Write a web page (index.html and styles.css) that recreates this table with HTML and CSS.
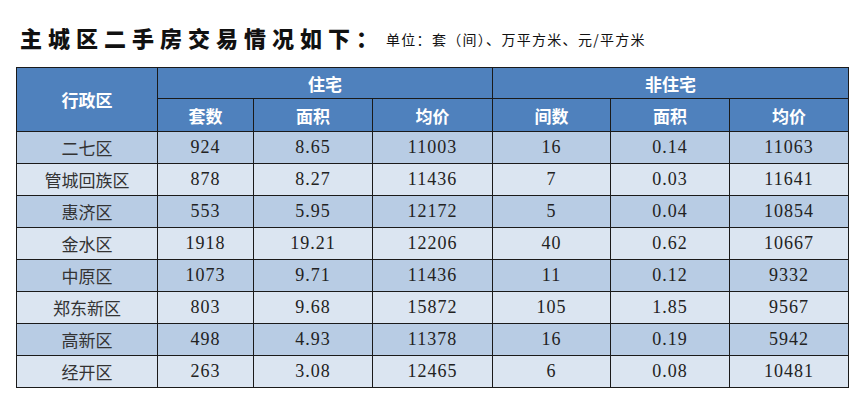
FILE: index.html
```html
<!DOCTYPE html>
<html lang="zh-CN">
<head>
<meta charset="utf-8">
<title>主城区二手房交易情况</title>
<link rel="stylesheet" href="styles.css">
</head>
<body>
<div class="page">
  <div class="heading">
    <span class="title">主城区二手房交易情况如下：</span>
    <span class="unit">单位：套（间）、万平方米、元/平方米</span>
  </div>
  <table class="data">
    <colgroup>
      <col class="c0"><col class="c1"><col class="c2"><col class="c3"><col class="c4"><col class="c5"><col class="c6">
    </colgroup>
    <thead>
      <tr class="h1">
        <th rowspan="2">行政区</th>
        <th colspan="3">住宅</th>
        <th colspan="3">非住宅</th>
      </tr>
      <tr class="h2">
        <th>套数</th><th>面积</th><th>均价</th>
        <th>间数</th><th>面积</th><th>均价</th>
      </tr>
    </thead>
    <tbody>
      <tr class="odd"><td class="name">二七区</td><td>924</td><td>8.65</td><td>11003</td><td>16</td><td>0.14</td><td>11063</td></tr>
      <tr class="even"><td class="name">管城回族区</td><td>878</td><td>8.27</td><td>11436</td><td>7</td><td>0.03</td><td>11641</td></tr>
      <tr class="odd"><td class="name">惠济区</td><td>553</td><td>5.95</td><td>12172</td><td>5</td><td>0.04</td><td>10854</td></tr>
      <tr class="even"><td class="name">金水区</td><td>1918</td><td>19.21</td><td>12206</td><td>40</td><td>0.62</td><td>10667</td></tr>
      <tr class="odd"><td class="name">中原区</td><td>1073</td><td>9.71</td><td>11436</td><td>11</td><td>0.12</td><td>9332</td></tr>
      <tr class="even"><td class="name">郑东新区</td><td>803</td><td>9.68</td><td>15872</td><td>105</td><td>1.85</td><td>9567</td></tr>
      <tr class="odd"><td class="name">高新区</td><td>498</td><td>4.93</td><td>11378</td><td>16</td><td>0.19</td><td>5942</td></tr>
      <tr class="even"><td class="name">经开区</td><td>263</td><td>3.08</td><td>12465</td><td>6</td><td>0.08</td><td>10481</td></tr>
    </tbody>
  </table>
</div>
</body>
</html>
```
FILE: styles.css
```css
html, body {
  margin: 0;
  padding: 0;
  background: #ffffff;
}

.page {
  width: 860px;
  height: 404px;
  padding: 23px 0 0 16px;
  box-sizing: border-box;
}

.heading {
  display: flex;
  align-items: center;
  height: 28px;
  padding-left: 4px;
  margin-bottom: 16px;
}

.title {
  font-family: "Noto Sans CJK SC", sans-serif;
  font-weight: 900;
  font-size: 22px;
  letter-spacing: 6px;
  color: #111;
  line-height: 28px;
}

.unit {
  font-family: "Noto Sans CJK SC", sans-serif;
  font-size: 14px;
  color: #111;
  margin-left: 2px;
  margin-top: 4px;
  letter-spacing: 1.3px;
}

.data {
  border-collapse: collapse;
  width: 832px;
  table-layout: fixed;
  border: 1.5px solid #1a1a1a;
}

.c0 { width: 141px; }
.c1 { width: 96px; }
.c2 { width: 119px; }
.c3 { width: 120px; }
.c4 { width: 118px; }
.c5 { width: 119px; }
.c6 { width: 119px; }

.data th,
.data td {
  border: 1px solid #1a1a1a;
  text-align: center;
  vertical-align: middle;
  padding: 0;
}

.data th {
  background: #4f81bd;
  color: #ffffff;
  font-family: "Noto Sans CJK SC", sans-serif;
  font-weight: 700;
  font-size: 17px;
}

.h1 th { height: 30px; }
.h2 th { height: 32px; }

.data td {
  height: 31px;
  font-family: "Liberation Serif", "Noto Sans CJK SC", serif;
  font-size: 18px;
  letter-spacing: 1px;
  color: #222;
}

.data td.name {
  font-family: "Noto Sans CJK SC", sans-serif;
  font-size: 17px;
  letter-spacing: 0;
  font-weight: 400;
  color: #333;
}

.odd td { background: #b8cce4; }
.even td { background: #dbe5f1; }
```
